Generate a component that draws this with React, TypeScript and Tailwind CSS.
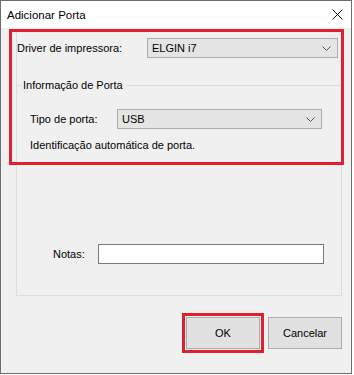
import React from 'react'

function Combo({ value, width }: { value: string; width: string }) {
  return (
    <div className={`${width} h-[20px] flex items-center justify-between border border-[#adadad] bg-[#e5e5e5] pl-[4px] pr-[6px]`}>
      <span>{value}</span>
      <svg width="9" height="5" viewBox="0 0 9 5" className="text-[#555]">
        <path d="M0.5 0.5 L4.5 4.5 L8.5 0.5" fill="none" stroke="currentColor" strokeWidth="1" />
      </svg>
    </div>
  )
}

export default function App() {
  return (
    <div className="relative w-[354px] h-[375px] bg-white text-[11px] leading-[16px] text-black font-['Segoe_UI','Liberation_Sans',Arial,sans-serif]">
      <div className="w-[352px] h-[374px] flex flex-col border border-[#6e6e6e] bg-[#f0f0f0]">
        {/* Title bar */}
        <div className="h-[27px] shrink-0 flex items-center justify-between bg-white pl-[6px] pr-[8px]">
          <span className="text-[11.5px]">Adicionar Porta</span>
          <svg width="11" height="11" viewBox="0 0 11 11">
            <path d="M0.5 0.5 L10.5 10.5 M10.5 0.5 L0.5 10.5" stroke="#111" strokeWidth="1" />
          </svg>
        </div>

        {/* Body */}
        <div className="flex flex-col">
          <div className="ml-[15px] mt-[3px] w-[326px] h-[265px] border border-[#dcdcdc] flex flex-col">
            <div className="mt-[6px] flex items-center">
              <span className="w-[130px]">Driver de impressora:</span>
              <Combo value="ELGIN i7" width="w-[191px]" />
            </div>

            {/* Group box */}
            <div className="mt-[19px] h-[16px] flex items-center">
              <div className="w-[5px] h-px bg-[#dcdcdc]" />
              <span className="px-[1px]">Informação de Porta</span>
              <div className="flex-1 h-px bg-[#dcdcdc] ml-[2px]" />
            </div>
            <div className="mt-[16px] flex items-center pl-[13px]">
              <span className="w-[87px]">Tipo de porta:</span>
              <Combo value="USB" width="w-[205px]" />
            </div>
            <div className="mt-[8px] pl-[13px]">Identificação automática de porta.</div>

            <div className="mt-[91px] flex items-center pl-[36px]">
              <span className="w-[45px]">Notas:</span>
              <div className="w-[226px] h-[20px] border border-[#7a7a7a] bg-white" />
            </div>
          </div>

          <div className="mt-[21px] flex justify-end gap-[8px] pr-[9px]">
            <div className="relative">
              <button className="w-[74px] h-[32px] border border-[#adadad] bg-[#e1e1e1]">OK</button>
              <span className="absolute -inset-[4px] border-[3px] border-[#e0202e]" />
            </div>
            <button className="w-[74px] h-[32px] border border-[#adadad] bg-[#e1e1e1]">Cancelar</button>
          </div>
        </div>
      </div>

      {/* Annotation over the top section */}
      <div className="absolute left-[9px] top-[29px] w-[335px] h-[136px] border-[3px] border-[#e0202e]" />
    </div>
  )
}
